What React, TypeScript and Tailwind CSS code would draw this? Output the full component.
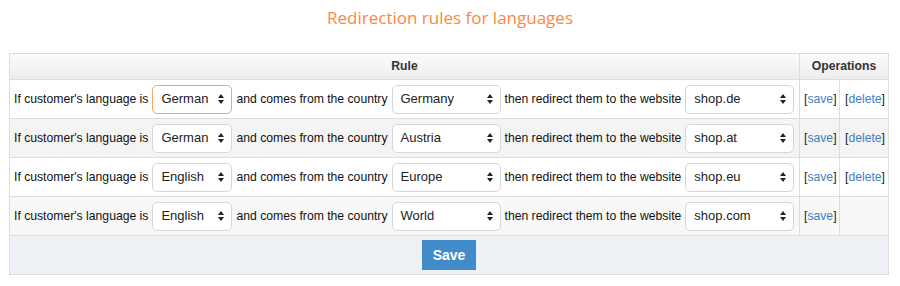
import React from "react";

interface Rule {
  language: string;
  country: string;
  website: string;
  canDelete: boolean;
  focused?: boolean;
}

const rules: Rule[] = [
  { language: "German", country: "Germany", website: "shop.de", canDelete: true, focused: true },
  { language: "German", country: "Austria", website: "shop.at", canDelete: true },
  { language: "English", country: "Europe", website: "shop.eu", canDelete: true },
  { language: "English", country: "World", website: "shop.com", canDelete: false },
];

const rowBg = ["bg-white", "bg-[#f4f4f4]", "bg-white", "bg-[#f8f8f8]"];

const Arrows = () => (
  <svg width="6" height="11" viewBox="0 0 6 11" className="absolute right-[7px] top-1/2 -translate-y-1/2">
    <path d="M0 4.5 L3 0.5 L6 4.5 Z" fill="#222" />
    <path d="M0 6.5 L3 10.5 L6 6.5 Z" fill="#222" />
  </svg>
);

const FakeSelect = ({
  value,
  width,
  focused,
}: {
  value: string;
  width: string;
  focused?: boolean;
}) => (
  <div
    className={`relative flex h-[29px] shrink-0 items-center rounded-[5px] border bg-white pl-[8px] text-[13px] text-[#222] ${width} ${
      focused ? "border-[#f0a866]" : "border-[#d6d6d6]"
    }`}
  >
    {value}
    <Arrows />
  </div>
);

const Link = ({ label }: { label: string }) => (
  <span className="text-[#222]">
    [<a className="text-[#3f7fc4] cursor-pointer">{label}</a>]
  </span>
);

const App = () => {
  return (
    <div className="w-[900px] h-[286px] bg-white font-['Liberation_Sans',Arial,sans-serif] text-[12.2px] text-[#111]">
      {/* title */}
      <h1 className="pt-[6px] text-center font-['Open_Sans',sans-serif] text-[17px] leading-[24px] text-[#f8884a]">
        Redirection rules for languages
      </h1>

      <table className="mt-[23px] ml-[9px] w-[879px] table-fixed border-collapse border border-[#dddddd]">
        <colgroup>
          <col className="w-[790px]" />
          <col className="w-[40px]" />
          <col className="w-[49px]" />
        </colgroup>
        <thead>
          <tr className="bg-linear-to-b from-[#fbfbfb] to-[#ededed]">
            <th className="h-[26px] border border-[#dddddd] font-bold text-[#333]">Rule</th>
            <th colSpan={2} className="h-[26px] border border-[#dddddd] font-bold text-[#333]">
              Operations
            </th>
          </tr>
        </thead>
        <tbody>
          {rules.map((rule, index: number) => (
            <tr key={index} className={rowBg[index]}>
              <td className="h-[39px] border border-[#dddddd] px-[4px]">
                <div className="flex items-center gap-[4px] whitespace-nowrap">
                  <span>If customer's language is</span>
                  <FakeSelect value={rule.language} width="w-[80px]" focused={rule.focused} />
                  <span>and comes from the country</span>
                  <FakeSelect value={rule.country} width="w-[109px]" />
                  <span>then redirect them to the website</span>
                  <FakeSelect value={rule.website} width="w-[109px]" />
                </div>
              </td>
              <td className="border border-[#dddddd] pl-[4px]">
                <Link label="save" />
              </td>
              <td className="border border-[#dddddd] pl-[5px]">
                {rule.canDelete && <Link label="delete" />}
              </td>
            </tr>
          ))}
          <tr className="bg-[#eef1f5]">
            <td colSpan={3} className="h-[39px] border border-[#dddddd] text-center">
              <button className="h-[30px] w-[54px] bg-[#428bca] text-[14px] font-bold text-white">
                Save
              </button>
            </td>
          </tr>
        </tbody>
      </table>
    </div>
  );
};

export default App;
